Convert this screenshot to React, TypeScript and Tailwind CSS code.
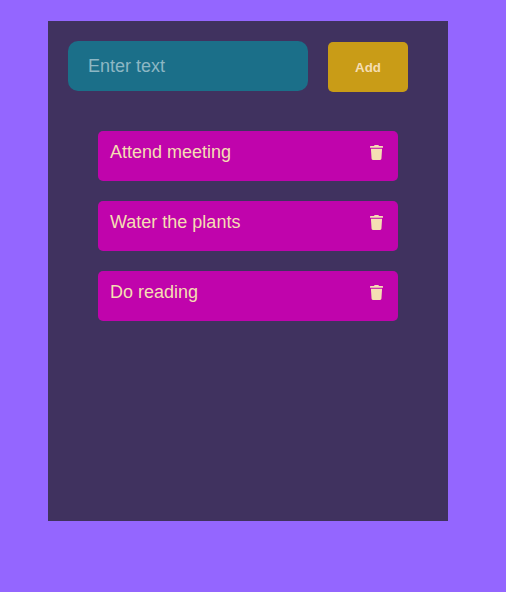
const items = ["Attend meeting", "Water the plants", "Do reading"];

function TrashIcon() {
  return (
    <svg viewBox="0 0 448 512" className="h-[15px] w-[13px]" fill="currentColor" aria-hidden="true">
      <path d="M432 32H312l-9.400-18.700A24 24 0 0 0 281.100 0H166.800a23.720 23.720 0 0 0-21.400 13.300L136 32H16A16 16 0 0 0 0 48v32a16 16 0 0 0 16 16h416a16 16 0 0 0 16-16V48a16 16 0 0 0-16-16zM53.200 467a48 48 0 0 0 47.900 45h245.800a48 48 0 0 0 47.900-45L416 128H32z" />
    </svg>
  );
}

export default function App() {
  return (
    <div className="min-h-screen bg-[#9466ff] pt-[21px] pl-12 font-['Liberation_Sans',Arial,sans-serif]">
      <main className="h-[500px] w-[400px] bg-[#40325f]">
        <form className="flex gap-5 pt-5 pl-5" onSubmit={(e) => e.preventDefault()}>
          <input
            type="text"
            placeholder="Enter text"
            className="h-[50px] w-60 rounded-[10px] bg-[#1b6f89] px-5 text-[18px] text-[#f5deb3] outline-none placeholder:text-[#8db7c4]"
          />
          <button className="mt-px h-[50px] w-20 rounded-[5px] bg-[#c99c17] pt-0.5 text-[13.333px] font-bold text-[#f5deb3]">
            Add
          </button>
        </form>
        <ul className="mt-[39px] ml-[50px] flex w-[300px] flex-col gap-5">
          {items.map((item) => (
            <li key={item} className="flex h-[50px] items-start justify-between rounded-[5px] bg-[#c004ac] pt-[11px] pr-[15px] pl-3 text-[18px] leading-5 text-[#f5deb3]">
              <span>{item}</span>
              <button aria-label={`Delete ${item}`} className="mt-[3px]">
                <TrashIcon />
              </button>
            </li>
          ))}
        </ul>
      </main>
    </div>
  );
}
